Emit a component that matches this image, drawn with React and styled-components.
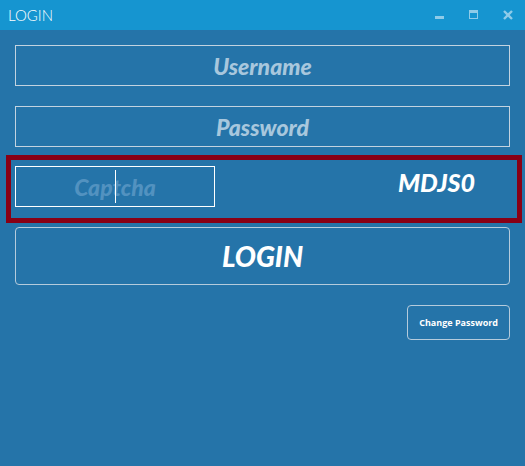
import React from "react";
import styled, { createGlobalStyle } from "styled-components";

const script = `Forte, Lato, "Liberation Sans", sans-serif`;

const GlobalStyle = createGlobalStyle`
  *, *::before, *::after { box-sizing: border-box; }
  body {
    margin: 0;
    background: #2574a9;
    color: #fff;
    font-family: "Open Sans", "Noto Sans", sans-serif;
  }
`;

const TitleBar = styled.header`
  display: flex;
  align-items: center;
  justify-content: space-between;
  height: 30px;
  padding: 0 8px;
  background: #1695d0;
`;

const Title = styled.h1`
  margin: 0;
  font-family: Lato, sans-serif;
  font-size: 15px;
  font-weight: 300;
  line-height: 30px;
`;

const WindowControls = styled.div`
  display: flex;
  gap: 16px;
`;

const ControlButton = styled.button`
  display: grid;
  place-items: center;
  width: 18px;
  height: 30px;
  padding: 0;
  border: 0;
  background: none;
  color: #8fcbe8;
`;

const Form = styled.form`
  display: flex;
  flex-direction: column;
  padding: 15px;
`;

const Field = styled.input`
  display: block;
  width: 100%;
  height: 41px;
  margin: 0;
  padding: 0 8px;
  border: 1px solid ${(p) => (p.$active ? "#fff" : "#c3d3e0")};
  border-radius: 0;
  outline: none;
  background: transparent;
  color: #fff;
  caret-color: ${(p) => (p.$active ? "transparent" : "#fff")};
  font-family: ${script};
  font-size: 23px;
  font-style: italic;
  font-weight: 900;
  text-align: center;

  &::placeholder {
    color: ${(p) => (p.$active ? "#5292c0" : "#a8c7dd")};
    opacity: 1;
  }
`;

const Credentials = styled.div`
  display: grid;
  gap: 20px;
`;

const CaptchaRow = styled.div`
  display: flex;
  justify-content: space-between;
  height: 68px;
  margin: 8px -12px 4px -9px;
  padding: 6px 42px 0 4px;
  border: 5px solid #880015;
`;

const CaptchaField = styled.div`
  position: relative;
  width: 200px;
`;

const Caret = styled.span`
  position: absolute;
  top: 4px;
  left: 50%;
  width: 1px;
  height: 33px;
  background: #fff;
`;

const CaptchaCode = styled.output`
  font-family: ${script};
  font-size: 25px;
  font-style: italic;
  font-weight: 900;
  line-height: 32px;
`;

const Button = styled.button`
  border: 1px solid #b5cbdc;
  border-radius: 4px;
  background: transparent;
  color: #fff;
`;

const LoginButton = styled(Button)`
  height: 58px;
  font-family: ${script};
  font-size: 28px;
  font-style: italic;
  font-weight: 900;
`;

const ChangeButton = styled(Button)`
  align-self: flex-end;
  height: 35px;
  margin-top: 20px;
  padding: 0 11px;
  font-family: "Open Sans", "Noto Sans", sans-serif;
  font-size: 9px;
  font-weight: 700;
`;

export default function App() {
  return (
    <>
      <GlobalStyle />
      <TitleBar>
        <Title>LOGIN</Title>
        <WindowControls>
          <ControlButton type="button" aria-label="Minimize">
            <svg width="10" height="10" shapeRendering="crispEdges" aria-hidden="true">
              <rect x="0" y="6" width="9" height="3" fill="currentColor" />
            </svg>
          </ControlButton>
          <ControlButton type="button" aria-label="Maximize">
            <svg width="10" height="10" shapeRendering="crispEdges" aria-hidden="true">
              <path fill="currentColor" fillRule="evenodd" d="M0 0H9V9H0ZM1 3V8H8V3Z" />
            </svg>
          </ControlButton>
          <ControlButton type="button" aria-label="Close">
            <svg width="10" height="10" viewBox="0 0 10 10" aria-hidden="true">
              <path d="M1 1L9 9M9 1L1 9" stroke="currentColor" strokeWidth="2.4" />
            </svg>
          </ControlButton>
        </WindowControls>
      </TitleBar>
      <Form onSubmit={(e) => e.preventDefault()}>
        <Credentials>
          <Field type="text" placeholder="Username" aria-label="Username" />
          <Field type="password" placeholder="Password" aria-label="Password" />
        </Credentials>
        <CaptchaRow>
          <CaptchaField>
            <Field $active type="text" placeholder="Captcha" aria-label="Captcha" autoComplete="off" />
            <Caret aria-hidden="true" />
          </CaptchaField>
          <CaptchaCode>MDJS0</CaptchaCode>
        </CaptchaRow>
        <LoginButton type="submit">LOGIN</LoginButton>
        <ChangeButton type="button">Change Password</ChangeButton>
      </Form>
    </>
  );
}
